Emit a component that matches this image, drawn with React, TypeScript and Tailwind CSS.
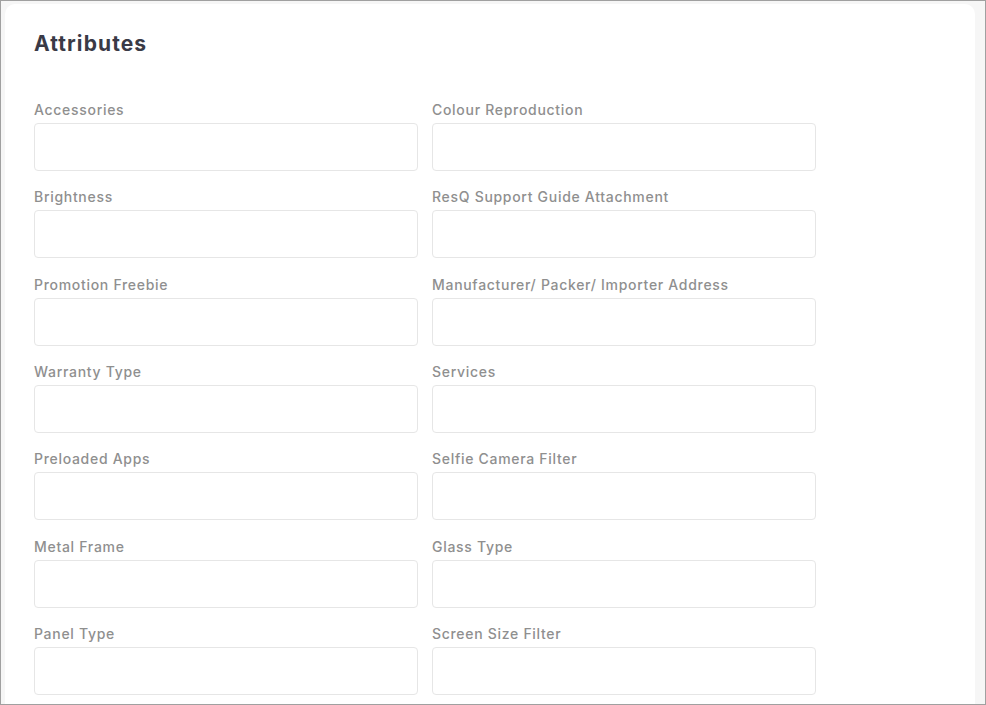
import React from 'react';

const fields: string[] = [
  'Accessories',
  'Colour Reproduction',
  'Brightness',
  'ResQ Support Guide Attachment',
  'Promotion Freebie',
  'Manufacturer/ Packer/ Importer Address',
  'Warranty Type',
  'Services',
  'Preloaded Apps',
  'Selfie Camera Filter',
  'Metal Frame',
  'Glass Type',
  'Panel Type',
  'Screen Size Filter',
];

const Field: React.FC<{ label: string }> = ({ label }) => (
  <div className="flex flex-col">
    <label className="text-[14px] leading-[20px] font-medium tracking-[0.7px] text-[#8f8f8f] mb-[3px]">{label}</label>
    <input
      type="text"
      className="h-[48px] w-full rounded-[4px] border border-[#e6e6e6] bg-white px-3 text-sm outline-none"
    />
  </div>
);

export default function App() {
  return (
    <div
      className="h-[705px] w-[986px] overflow-hidden border border-[#a0a0a0] bg-[#f6f6f6] pt-[3px] pl-[4px] pr-[10px]"
      style={{ fontFamily: 'Inter, "Noto Sans", sans-serif' }}
    >
      <div className="min-h-[760px] rounded-[10px] bg-white pl-[29px] pt-[26px]">
        <h2 className="text-[21px] leading-[28px] font-bold tracking-[1.1px] text-[#3a3a46]">Attributes</h2>
        <div className="mt-[42px] grid w-[782px] grid-cols-2 gap-x-[14px] gap-y-[16.33px]">
          {fields.map((f) => (
            <Field key={f} label={f} />
          ))}
        </div>
      </div>
    </div>
  );
}
